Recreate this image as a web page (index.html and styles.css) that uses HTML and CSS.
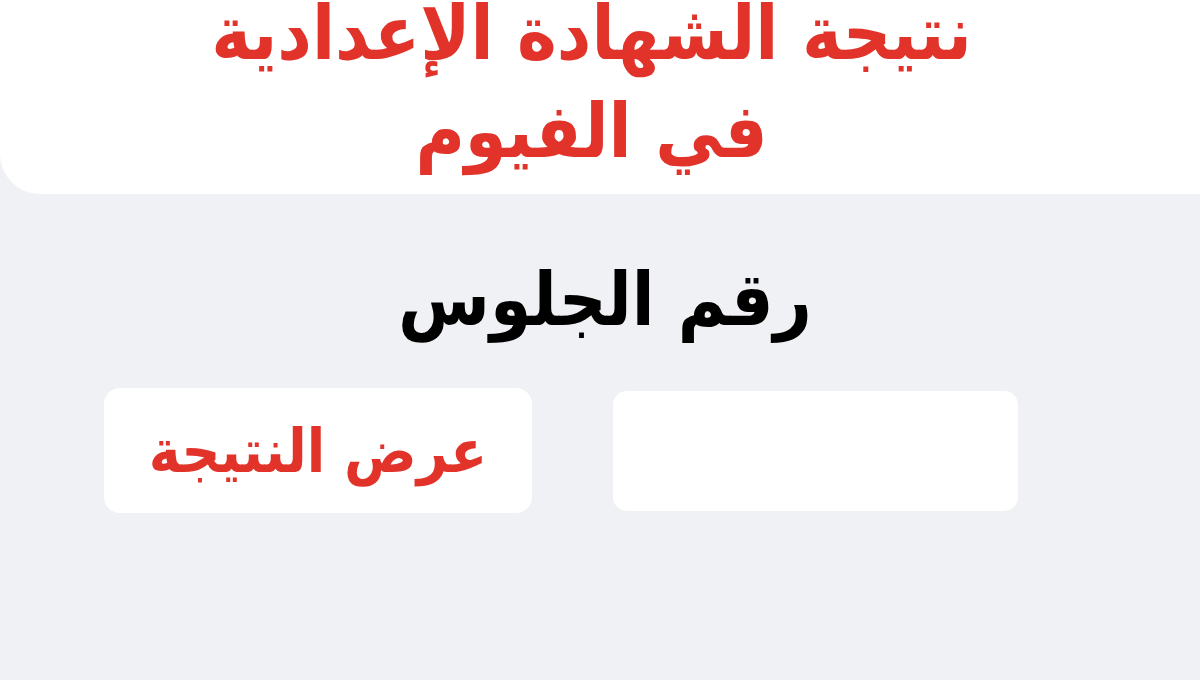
FILE: index.html
```html
<!DOCTYPE html>
<html lang="ar" dir="rtl">
<head>
  <meta charset="UTF-8" />
  <meta name="viewport" content="width=device-width, initial-scale=1.0" />
  <title>نتيجة الشهادة الإعدادية في الفيوم</title>
  <link rel="stylesheet" href="styles.css">
</head>
<body>
  <header class="top-panel">
    <h1 class="title">نتيجة الشهادة الإعدادية<br>في الفيوم</h1>
  </header>

  <main class="search">
    <h2 class="seat-label">رقم الجلوس</h2>
    <div class="search-row">
      <input type="text" class="seat-input" id="seatNumber">
      <button class="show-btn">عرض النتيجة</button>
    </div>
  </main>
</body>
</html>
```

FILE: styles.css
```css
body {
  font-family: 'DejaVu Sans Condensed', 'DejaVu Sans', sans-serif;
  background-color: #f0f1f4;
  margin: 0;
  height: 680px;
  overflow: hidden;
}

.top-panel {
  background: #fff;
  height: 194px;
  border-bottom-left-radius: 40px;
  overflow: hidden;
  text-align: center;
}

.title {
  margin: -16px 0 0;
  padding-right: 17px;
  color: #e2332a;
  font-size: 75px;
  line-height: 98px;
  font-weight: bold;
}

.search {
  text-align: center;
}

.seat-label {
  margin: 55px 0 0;
  padding-left: 10px;
  color: #000;
  font-size: 74px;
  line-height: 100px;
  font-weight: bold;
}

.search-row {
  display: flex;
  align-items: center;
  gap: 81px;
  margin-top: 39px;
  padding-right: 182px;
}

.seat-input {
  width: 405px;
  height: 120px;
  box-sizing: border-box;
  border: none;
  border-radius: 14px;
  background: #fff;
  outline: none;
}

.show-btn {
  width: 428px;
  height: 125px;
  border: none;
  border-radius: 16px;
  background: #fff;
  color: #e2332a;
  font-family: 'DejaVu Sans Condensed', 'DejaVu Sans', sans-serif;
  font-size: 60px;
  font-weight: bold;
  cursor: pointer;
}
```
